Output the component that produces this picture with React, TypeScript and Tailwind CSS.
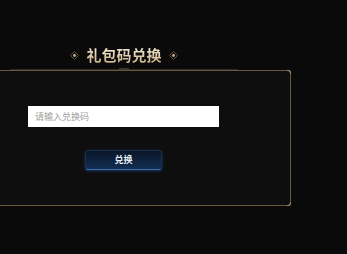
import { useState } from 'react';

const font = { fontFamily: '"Noto Sans CJK SC", "Noto Sans", sans-serif' };

function Diamond() {
  return (
    <svg width="9" height="9" viewBox="0 0 9 9" className="shrink-0">
      <path d="M4.5 0.5 L8.5 4.5 L4.5 8.5 L0.5 4.5 Z" fill="none" stroke="#5e523f" strokeWidth="1" />
      <circle cx="4.5" cy="4.5" r="1.4" fill="#c9b48e" />
    </svg>
  );
}

export default function App() {
  const [code, setCode] = useState('');

  return (
    <div className="w-[347px] h-[254px] overflow-hidden bg-[#0a0a0b]" style={font}>
      {/* Title */}
      <div className="w-[248px] pt-[45px] flex items-center justify-center gap-[7px]">
        <Diamond />
        <h1 className="text-[15px] leading-[20px] font-bold bg-gradient-to-b from-[#fbf3e0] to-[#c7ad82] bg-clip-text text-transparent">
          礼包码兑换
        </h1>
        <Diamond />
      </div>

      {/* Ornament line */}
      <div className="mt-[3px] ml-[10px] w-[228px] h-[2px] flex items-center">
        <div className="flex-1 h-px bg-[#332c22]" />
        <div className="w-[10px] h-[2px] bg-[#3f3629]" />
        <div className="flex-1 h-px bg-[#332c22]" />
      </div>

      {/* Panel */}
      <div className="relative ml-[-10px] w-[301px] h-[136px] border border-[#655742] rounded-tr-[3px] rounded-br-[3px] bg-[#0e0e0f] pt-[35px] pl-[37px]">
        <span className="absolute -top-px -right-px w-[4px] h-[4px] border-t border-r border-[#9c8766] rounded-tr-[3px]" />
        <span className="absolute -bottom-px -right-px w-[4px] h-[4px] border-b border-r border-[#9c8766] rounded-br-[3px]" />
        <div className="w-[191px] flex flex-col items-center gap-[23px]">
          <input
            value={code}
            onChange={(e) => setCode(e.target.value)}
            placeholder="请输入兑换码"
            className="w-[191px] h-[21px] bg-white px-[7px] text-[9px] text-[#333] placeholder:text-[#a0a0a0] outline-none"
          />
          <button className="w-[77px] h-[20px] rounded-[3px] border border-[#16304f] border-b-[#3a72b5] bg-gradient-to-b from-[#0b1628] to-[#122e52] text-[9px] font-bold text-[#e8eef7] shadow-[0_1px_3px_rgba(50,110,190,0.45)]">
            兑换
          </button>
        </div>
      </div>
    </div>
  );
}
